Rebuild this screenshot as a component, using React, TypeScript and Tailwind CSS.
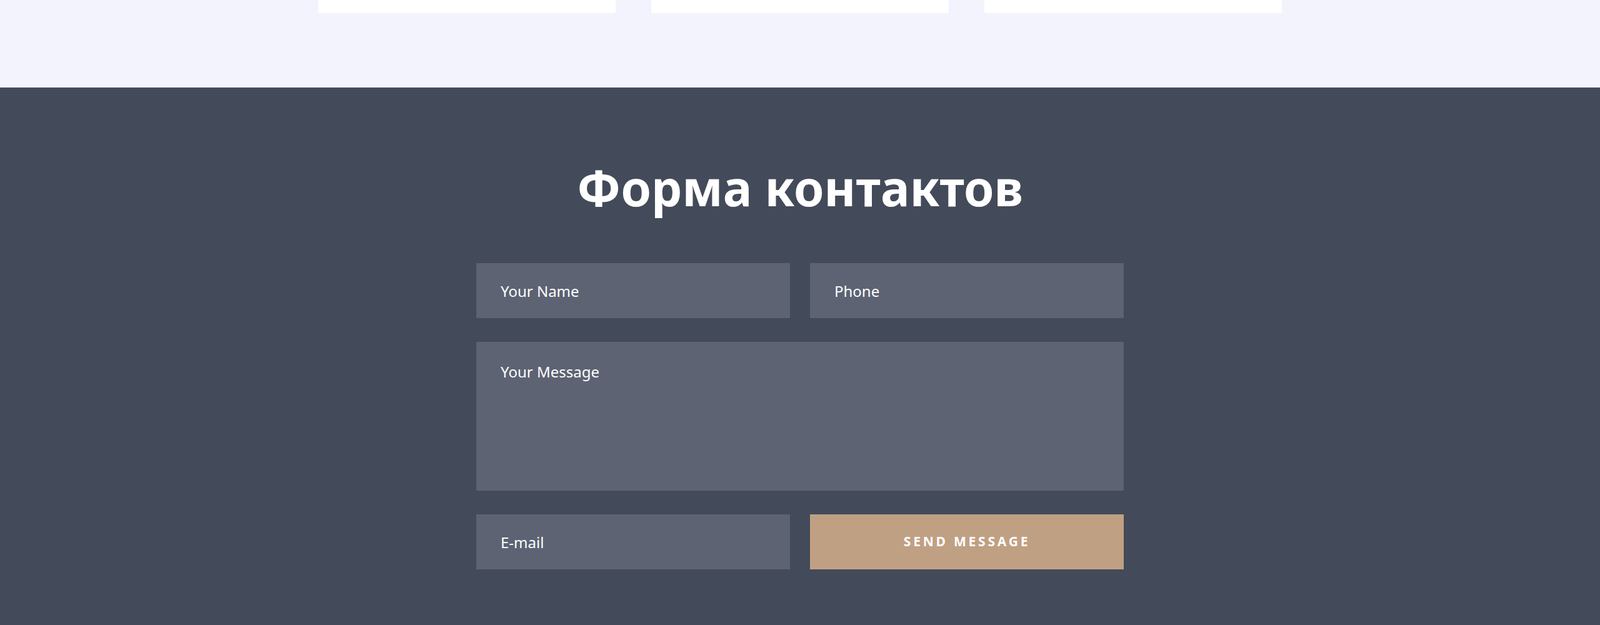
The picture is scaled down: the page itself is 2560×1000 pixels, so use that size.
export default function App() {
  const input =
    "h-[88px] bg-[#5d6373] px-[39px] text-[24px] text-white placeholder-white outline-none";
  return (
    <div className="w-[2560px] h-[1000px] overflow-hidden font-['Lato','Open_Sans',sans-serif]">
      <div className="h-[140px] bg-[#f2f3fc] flex justify-center gap-[57px]">
        <div className="w-[476px] h-[21px] bg-white" />
        <div className="w-[476px] h-[21px] bg-white" />
        <div className="w-[476px] h-[21px] bg-white" />
      </div>
      <div className="h-[860px] bg-[#434a59] flex flex-col items-center">
        <h2 className="mt-[115px] text-[78px] leading-[90px] font-bold text-white font-['Roboto',sans-serif]">
          Форма контактов
        </h2>
        <form className="mt-[76px] w-[1036px] grid grid-cols-2 gap-x-[32px] gap-y-[38px]">
          <input className={input} placeholder="Your Name" />
          <input className={input} placeholder="Phone" />
          <textarea
            className="col-span-2 h-[238px] resize-none bg-[#5d6373] px-[39px] pt-[30px] text-[24px] text-white placeholder-white outline-none"
            placeholder="Your Message"
          />
          <input className={input} placeholder="E-mail" />
          <button
            type="button"
            className="h-[88px] bg-[#c0a083] text-white text-[21px] font-bold tracking-[0.18em]"
          >
            SEND MESSAGE
          </button>
        </form>
      </div>
    </div>
  );
}
